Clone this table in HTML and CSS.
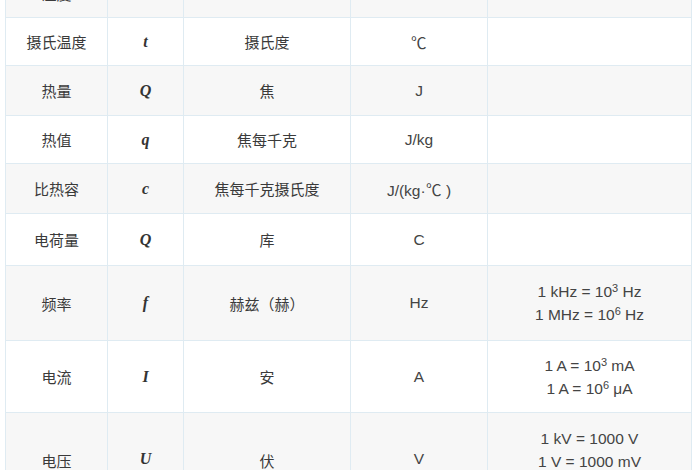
FILE: index.html
```html
<!DOCTYPE html>
<html lang="zh-CN">
<head>
<meta charset="utf-8">
<title>物理量单位</title>
<link rel="stylesheet" href="styles.css">
</head>
<body>
<table class="units">
  <colgroup>
    <col class="c-name"><col class="c-sym"><col class="c-unit"><col class="c-abbr"><col class="c-conv">
  </colgroup>
  <tbody>
    <tr class="r48"><td class="zh">温度</td><td class="sym"></td><td class="zh"></td><td class="abbr"></td><td class="conv"></td></tr>
    <tr class="r48"><td class="zh">摄氏温度</td><td class="sym">t</td><td class="zh">摄氏度</td><td class="abbr">℃</td><td class="conv"></td></tr>
    <tr class="r50"><td class="zh">热量</td><td class="sym">Q</td><td class="zh">焦</td><td class="abbr">J</td><td class="conv"></td></tr>
    <tr class="r48"><td class="zh">热值</td><td class="sym">q</td><td class="zh">焦每千克</td><td class="abbr">J/kg</td><td class="conv"></td></tr>
    <tr class="r50"><td class="zh">比热容</td><td class="sym">c</td><td class="zh">焦每千克摄氏度</td><td class="abbr">J/(kg·℃ )</td><td class="conv"></td></tr>
    <tr class="r52"><td class="zh">电荷量</td><td class="sym">Q</td><td class="zh">库</td><td class="abbr">C</td><td class="conv"></td></tr>
    <tr class="r75"><td class="zh">频率</td><td class="sym">f</td><td class="zh">赫兹（赫）</td><td class="abbr">Hz</td><td class="conv">1 kHz = 10<sup>3</sup> Hz<br>1 MHz = 10<sup>6</sup> Hz</td></tr>
    <tr class="r72"><td class="zh">电流</td><td class="sym">I</td><td class="zh">安</td><td class="abbr">A</td><td class="conv">1 A = 10<sup>3</sup> mA<br>1 A = 10<sup>6</sup> μA</td></tr>
    <tr class="r96"><td class="zh">电压</td><td class="sym">U</td><td class="zh">伏</td><td class="abbr">V</td><td class="conv">1 kV = 1000 V<br>1 V = 1000 mV<br>1 mV = 1000 μV</td></tr>
  </tbody>
</table>
</body>
</html>
```
FILE: styles.css
```css
html, body {
  margin: 0;
  padding: 0;
  background: #ffffff;
  overflow: hidden;
}
.units {
  border-collapse: collapse;
  table-layout: fixed;
  width: 686px;
  margin: -31px 0 0 5px;
  color: #333333;
  font-family: "Noto Sans CJK SC", "Liberation Sans", sans-serif;
  font-size: 15px;
}
.c-name { width: 102px; }
.c-sym { width: 76px; }
.c-unit { width: 167px; }
.c-abbr { width: 137px; }
.c-conv { width: 204px; }
.units td {
  border: 1px solid #dfebf2;
  text-align: center;
  vertical-align: middle;
  padding: 0 6px;
}
.units tr:nth-child(odd) { background: #f7f7f7; }
.units tr:nth-child(even) { background: #ffffff; }
.units tr:last-child td { vertical-align: top; }
.units tr:last-child td.conv { padding-top: 14px; }
.units tr:last-child td.zh,
.units tr:last-child td.sym,
.units tr:last-child td.abbr { padding-top: 37px; }
.r48 { height: 48px; }
.r50 { height: 50px; }
.r52 { height: 52px; }
.r72 { height: 72px; }
.r75 { height: 75px; }
.r96 { height: 96px; }
.zh { color: #3a3a3a; }
.sym {
  font-family: "Liberation Serif", serif;
  font-style: italic;
  font-weight: bold;
  font-size: 16px;
  color: #333333;
}
.abbr, .conv {
  font-family: "Liberation Sans", sans-serif;
  font-size: 15.5px;
  color: #444444;
}
.conv { line-height: 23px; }
.conv sup {
  font-size: 11px;
  line-height: 0;
  vertical-align: 5px;
}
```
